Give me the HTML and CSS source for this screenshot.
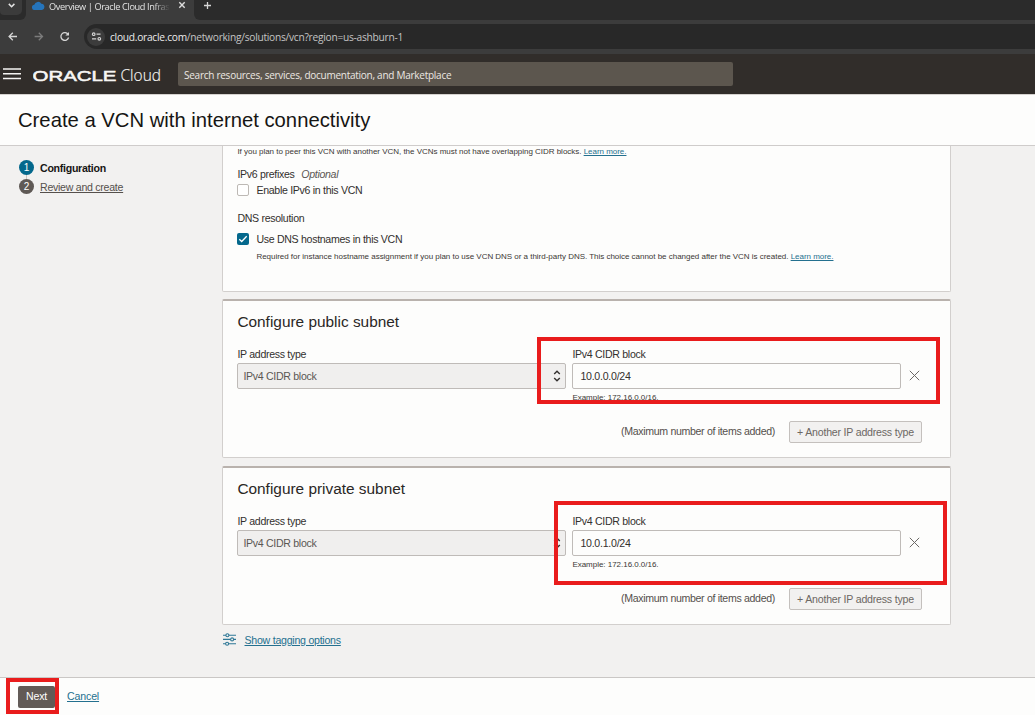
FILE: index.html
```html
<!DOCTYPE html>
<html lang="en">
<head>
<meta charset="utf-8">
<title>Overview | Oracle Cloud Infrastructure</title>
<link rel="stylesheet" href="styles.css">
</head>
<body>
<div class="window">
  <div class="tabstrip">
    <div class="tab-search-area"><div class="tab-search"><svg width="22" height="15" viewBox="0 0 22 15"><path d="M8.8 3.9l2.8 2.8 2.8-2.8" fill="none" stroke="#e3e3e3" stroke-width="1.5"/></svg></div></div>
    <div class="tab">
      <svg class="cloud" width="13" height="9" viewBox="0 0 13 9"><path d="M2.8 9A2.6 2.6 0 0 1 2.3 3.8 3.9 3.9 0 0 1 9.4 2.7 3.2 3.2 0 0 1 10 9Z" fill="#2574bb"/></svg>
      <span class="tab-title">Overview | Oracle Cloud Infrastr</span>
      <svg class="tab-close" width="8" height="8" viewBox="0 0 8 8"><path d="M1.3 1.3l5.4 5.4M6.7 1.3L1.3 6.7" stroke="#dedede" stroke-width="1.4"/></svg>
    </div>
    <div class="strip-rest"><svg class="new-tab" width="9" height="9" viewBox="0 0 9 9"><path d="M4.5 1v7M1 4.5h7" stroke="#d6d6d6" stroke-width="1.3"/></svg></div>
  </div>
  <div class="toolbar">
    <svg width="84" height="34" viewBox="0 0 84 34" fill="none" stroke-width="1.3">
      <path d="M17 16.5H9.3M12.8 12.8L9.1 16.5l3.7 3.7" stroke="#d5d5d5"/>
      <path d="M34.6 16.5h7.7M38.8 12.8l3.7 3.7-3.7 3.7" stroke="#7c7c7c"/>
      <path d="M68.1 14.4A3.9 3.9 0 1 0 68.6 17.5" stroke="#d5d5d5"/>
      <path d="M69 12v3.6h-3.6z" fill="#d5d5d5"/>
    </svg>
    <div class="omnibox">
      <div class="site-info"><svg width="11" height="9" viewBox="0 0 11 9" fill="none" stroke="#d5d5d5" stroke-width="1.2"><circle cx="2.7" cy="2.2" r="1.3"/><path d="M5.5 2.2h4M1 6.8h4.2"/><circle cx="8.3" cy="6.8" r="1.3"/></svg></div>
      <span class="url"><b>cloud.oracle.com</b>/networking/solutions/vcn?region=us-ashburn-1</span>
    </div>
  </div>
  <header class="cloud-header">
    <svg class="menu" width="18" height="12" viewBox="0 0 18 12"><path d="M0 1h18M0 5.7h18M0 10.4h18" stroke="#f5f4f2" stroke-width="1.5"/></svg>
    <svg class="logo" width="132" height="26" viewBox="0 0 132 26" fill="#f7f6f4">
      <text class="logo-oracle" x="-.5" y="19.5" textLength="84" lengthAdjust="spacingAndGlyphs">ORACLE</text>
      <text class="logo-cloud" x="87.5" y="19.5" textLength="40.5" lengthAdjust="spacingAndGlyphs">Cloud</text>
    </svg>
    <div class="search">Search resources, services, documentation, and Marketplace</div>
  </header>
  <div class="page-title"><h1>Create a VCN with internet connectivity</h1></div>
  <main class="main">
    <nav class="steps">
      <div class="step current"><i>1</i><span>Configuration</span></div>
      <div class="step"><i>2</i><a>Review and create</a></div>
    </nav>
    <div class="content">
      <section class="card first">
        <p class="hint peer">If you plan to peer this VCN with another VCN, the VCNs must not have overlapping CIDR blocks. <a>Learn more.</a></p>
        <div class="label ipv6">IPv6 prefixes <em>Optional</em></div>
        <div class="check"><span class="box"></span><span>Enable IPv6 in this VCN</span></div>
        <div class="label dns">DNS resolution</div>
        <div class="check dns-check"><span class="box on"><svg width="12" height="12" viewBox="0 0 12 12"><path d="M2.3 6.2l2.4 2.3 5-5.2" fill="none" stroke="#fff" stroke-width="1.3"/></svg></span><span>Use DNS hostnames in this VCN</span></div>
        <p class="hint required">Required for instance hostname assignment if you plan to use VCN DNS or a third-party DNS. This choice cannot be changed after the VCN is created. <a>Learn more.</a></p>
      </section>
      <section class="card subnet">
        <h2>Configure public subnet</h2>
        <div class="fields">
          <div class="field type"><div class="label">IP address type</div><div class="select">IPv4 CIDR block<svg width="8" height="12" viewBox="0 0 8 12"><path d="M1.2 4L4 1.3 6.8 4M1.2 8L4 10.7 6.8 8" fill="none" stroke="#33302e" stroke-width="1.4"/></svg></div></div>
          <div class="field block"><div class="label">IPv4 CIDR block</div><div class="input">10.0.0.0/24</div><p class="hint example">Example: 172.16.0.0/16.</p></div>
          <svg class="remove" width="11" height="11" viewBox="0 0 11 11"><path d="M.8.8l9.4 9.4M10.2.8L.8 10.2" stroke="#6c6966" stroke-width="1"/></svg>
        </div>
        <div class="actions"><span class="maximum">(Maximum number of items added)</span><span class="add">+ Another IP address type</span></div>
        <div class="mark mark-public"></div>
      </section>
      <section class="card subnet private">
        <h2>Configure private subnet</h2>
        <div class="fields">
          <div class="field type"><div class="label">IP address type</div><div class="select">IPv4 CIDR block<svg width="8" height="12" viewBox="0 0 8 12"><path d="M1.2 4L4 1.3 6.8 4M1.2 8L4 10.7 6.8 8" fill="none" stroke="#33302e" stroke-width="1.4"/></svg></div></div>
          <div class="field block"><div class="label">IPv4 CIDR block</div><div class="input">10.0.1.0/24</div><p class="hint example">Example: 172.16.0.0/16.</p></div>
          <svg class="remove" width="11" height="11" viewBox="0 0 11 11"><path d="M.8.8l9.4 9.4M10.2.8L.8 10.2" stroke="#6c6966" stroke-width="1"/></svg>
        </div>
        <div class="actions"><span class="maximum">(Maximum number of items added)</span><span class="add">+ Another IP address type</span></div>
        <div class="mark mark-private"></div>
      </section>
      <div class="tagging"><svg width="13" height="13" viewBox="0 0 13 13" fill="none" stroke="#2f7896" stroke-width="1.1"><path d="M0 2.3h3M6 2.3h7M0 6.4h7.5M10.8 6.4h2.2M0 10.7h2.5M5.7 10.7h7.3"/><circle cx="4.4" cy="2.3" r="1.5"/><circle cx="9.1" cy="6.4" r="1.5"/><circle cx="4.1" cy="10.7" r="1.5"/></svg><a>Show tagging options</a></div>
    </div>
  </main>
  <footer class="footer"><span class="next">Next</span><a>Cancel</a><div class="mark mark-next"></div></footer>
</div>
</body>
</html>
```
FILE: styles.css
```css
* { box-sizing: border-box; }
body { margin: 0; background: #fff; font-family: "Liberation Sans", Arial, sans-serif; font-size: 10.6px; letter-spacing: -.31px; color: #33302e; }
h1, h2, p { margin: 0; font-weight: 400; letter-spacing: 0; }
a { color: #24708f; text-decoration: underline; text-underline-offset: 1px; }
svg { display: block; flex: none; }
.window { width: 1035px; height: 715px; overflow: hidden; display: flex; flex-direction: column; white-space: nowrap; }

.tabstrip { height: 20px; background: #3c3c3c; display: flex; flex: none; }
.tab-search-area { width: 26px; height: 20px; background: #2b2b2b; border-radius: 0 0 6px 0; }
.tab-search { width: 22px; height: 15px; background: #3b3b3b; border-radius: 0 0 5px 4px; }
.tab { width: 168px; padding: 0 8px 0 6px; height: 20px; display: flex; }
.cloud { margin-top: 1px; }
.tab-title { font: 9.2px/13px "Open Sans", sans-serif; color: #e3e3e3; width: 121px; margin-left: 4px; letter-spacing: -.38px; -webkit-mask-image: linear-gradient(to right, #000 86%, transparent); mask-image: linear-gradient(to right, #000 86%, transparent); }
.tab-close { margin: 1px 0 0 8px; }
.strip-rest { flex: 1; background: #2b2b2b; border-radius: 0 0 0 6px; }
.new-tab { margin: 1px 0 0 9px; }
.toolbar { height: 34px; flex: none; display: flex; background: #3c3c3c; }
.omnibox { flex: 1; height: 25px; margin-top: 4px; border-radius: 13px 0 0 13px; background: #282828; display: flex; align-items: center; }
.site-info { width: 18px; height: 18px; border-radius: 50%; margin-left: 3px; background: #3c3c3c; display: flex; align-items: center; justify-content: center; }
.url { font: 10.2px/16px "Open Sans", sans-serif; color: #c4c4c4; margin-left: 5px; letter-spacing: -.26px; }
.url b { font-weight: 400; color: #ececec; }

.cloud-header { height: 40px; flex: none; background: #312d2a; display: flex; align-items: center; }
.menu { margin-left: 3px; }
.logo { margin-left: 12px; letter-spacing: 0; }
.logo-oracle { font: 15.2px "Liberation Sans", Arial, sans-serif; stroke: #f7f6f4; stroke-width: .55px; }
.logo-cloud { font: 300 15.6px "Open Sans", sans-serif; stroke: #f7f6f4; stroke-width: .15px; }
.search { width: 555px; height: 24px; margin-left: 13px; padding-left: 6px; border-radius: 2px; background: #5c564e; color: #ece8e3; font: 10px/26px "Open Sans", sans-serif; letter-spacing: -.26px; }

.page-title { height: 52px; flex: none; background: #fdfdfc; border-top: 1px solid #d5d2cf; border-bottom: 1px solid #cfcccb; padding-left: 18px; }
h1 { font-size: 20.25px; line-height: 50px; color: #161513; }

.main { height: 531px; flex: none; background: #f2f1f0; display: flex; overflow: hidden; }
.steps { width: 222px; padding: 14px 0 0 19px; }
.step { height: 20px; display: flex; align-items: flex-start; gap: 6px; line-height: 16px; letter-spacing: -.27px; }
.step i { width: 15px; height: 15px; border-radius: 50%; background: #5f5955; color: #fff; font: 10px/15px "Liberation Sans", Arial, sans-serif; text-align: center; }
.step.current { height: 19px; color: #161513; font-weight: 700; background: linear-gradient(#c9c5c2, #c9c5c2) 7px 0 / 1px 19px no-repeat; }
.step.current i { background: #04688c; }
.step a { color: #55504c; }
.content { width: 729px; }
.card { position: relative; width: 729px; background: #fdfdfc; border: 1px solid #d2cfcd; border-radius: 2px; padding-left: 14.4px; }
.card.first { height: 146px; border-top: 0; border-radius: 0 0 2px 2px; }
.hint { font-size: 8px; line-height: 10px; letter-spacing: -.025px; color: #3b3734; }
.peer { padding-top: 1px; }
.label { line-height: 14px; }
.label em { margin-left: 4px; color: #5b5753; }
.ipv6 { margin-top: 10px; }
.check { display: flex; align-items: center; gap: 7px; height: 14px; margin-top: 2px; }
.box { width: 12px; height: 12px; border: 1px solid #bdb9b5; border-radius: 2px; background: #fff; }
.box.on { border: 0; background: #04688c; }
.dns { margin-top: 14px; }
.dns-check { margin-top: 7px; }
.required { margin: 6px 0 0 19px; }
.subnet { height: 159px; margin-top: 7px; border-top: 2px solid #b9b2ad; }
.private { margin-top: 8px; }
h2 { font-size: 15.4px; line-height: 20px; padding-top: 11px; color: #2a2725; }
.fields { display: flex; margin-top: 15px; }
.type { width: 329px; }
.block { width: 329px; margin-left: 6px; }
.select, .input { height: 26px; margin-top: 2px; border: 1px solid #bfbbb8; border-radius: 2px; line-height: 24px; }
.select { background: #f0efee; color: #5b5753; padding: 0 4px 0 5px; display: flex; align-items: center; justify-content: space-between; }
.input { padding-left: 7px; background: #fdfdfc; }
.block .input { letter-spacing: -.25px; }
.example { margin-top: 4px; }
.remove { margin: 23px 0 0 8px; }
.actions { display: flex; justify-content: flex-end; padding-right: 28px; gap: 14px; line-height: 20px; margin-top: 18px; color: #55504c; }
.maximum { letter-spacing: -.33px; }
.add { width: 133px; height: 22px; border: 1px solid #c4c0bd; border-radius: 2px; background: #f2f1f0; text-align: center; color: #6c6763; letter-spacing: -.21px; }
.mark { position: absolute; border: 4px solid #e91c1c; }
.mark-public { left: 314px; top: 36px; width: 403px; height: 67px; }
.mark-private { left: 331px; top: 33px; width: 393px; height: 84px; }
.tagging { display: flex; gap: 9px; padding: 8px 0 0 .5px; line-height: 14px; letter-spacing: -.25px; }

.footer { position: relative; height: 38px; flex: none; border-top: 1px solid #cac7c5; background: #fdfdfc; padding: 8px 0 0 18px; display: flex; line-height: 21px; gap: 12px; letter-spacing: -.15px; }
.next { width: 37px; height: 22px; border-radius: 2px; background: #625a56; color: #fff; text-align: center; }
.mark-next { left: 6px; top: 0; width: 53px; height: 36px; }
```
